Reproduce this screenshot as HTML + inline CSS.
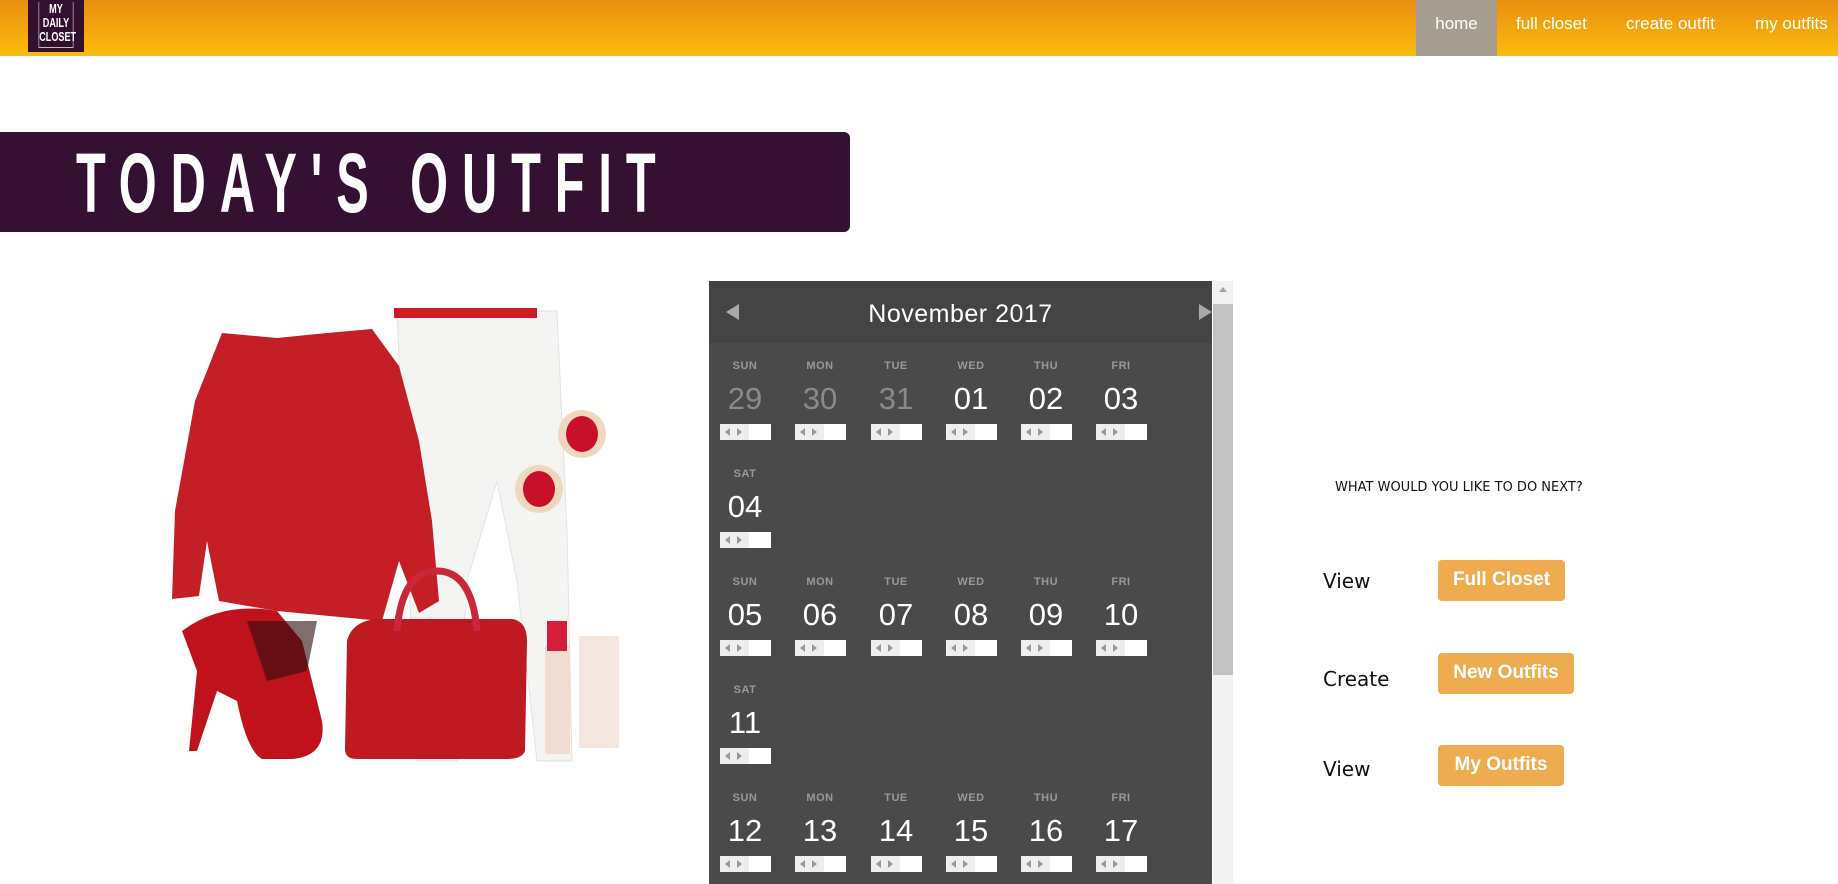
<!DOCTYPE html>
<html><head><meta charset="utf-8"><style>
*{margin:0;padding:0;box-sizing:border-box}
body{width:1838px;height:884px;overflow:hidden;background:#fff;font-family:"Liberation Sans",sans-serif;position:relative}
.nav{position:absolute;left:0;top:0;width:1838px;height:56px;background:linear-gradient(#ea8f10,#f8bd0c)}
.logo{position:absolute;left:28px;top:0;width:56px;height:52px;background:#33102f;color:#fff;font:bold 13px/14px "Liberation Sans",sans-serif;text-align:center;padding-top:2px}
.logo div{border:1px solid #cbb;border-top:none;margin:0 3px;height:46px;transform:scaleX(.7);transform-origin:center}
.nl{position:absolute;top:0;height:56px;line-height:48px;color:#fff;font-size:17px}
.banner{position:absolute;left:0;top:132px;width:850px;height:100px;background:#341032;border-radius:0 6px 6px 0}
.banner span{position:absolute;left:76px;top:9px;color:#fff;font:bold 84px/84px "Liberation Sans",sans-serif;letter-spacing:24px;transform:scaleX(.58);transform-origin:left top;white-space:nowrap}
.cal{position:absolute;left:709px;top:281px;width:503px;height:603px;background:#4a4a4a;overflow:hidden}
.calh{height:62px;background:#444;color:#fff;text-align:center;font-size:25px;line-height:66px;letter-spacing:.5px}
.sb{position:absolute;left:1213px;top:281px;width:20px;height:603px;background:#f1f1f1}
.d{position:absolute;width:60px;text-align:center}
.d b{display:block;font-size:11px;color:#999;letter-spacing:.5px;height:20px}
.d i{display:block;font-style:normal;font-size:31px;color:#fff;height:38px;line-height:38px}
.d i.g{color:#8a8a8a}
.bar{position:absolute;left:5px;width:51px;height:16px;background:#fff}
.bar:before{content:"";position:absolute;left:0;top:0;width:29px;height:16px;background:#eee}
.bar u{position:absolute;top:4px;width:0;height:0;border-top:4px solid transparent;border-bottom:4px solid transparent}
.q{font-family:"DejaVu Sans","Liberation Sans",sans-serif;position:absolute}
.btn{position:absolute;left:1438px;height:41px;background:#eeab4f;border-radius:4px;color:#fff;font:bold 19px/40px "Liberation Sans",sans-serif;text-align:center}
</style></head><body>
<div class="nav">
<div class="logo"><div>MY<br>DAILY<br>CLOSET</div></div>
<div class="nl" style="left:1416px;width:81px;background:#a59e90;text-align:center">home</div>
<div class="nl" style="left:1516px">full closet</div>
<div class="nl" style="left:1626px">create outfit</div>
<div class="nl" style="left:1755px">my outfits</div>
</div>
<div class="banner"><span>TODAY'S OUTFIT</span></div>

<svg style="position:absolute;left:127px;top:281px" width="510" height="505" viewBox="0 0 510 505">
<rect width="510" height="505" fill="#fff"/>
<path d="M270 30 L430 30 L440 250 L445 480 L410 480 L390 300 L370 200 L340 300 L330 480 L290 480 Z" fill="#f4f5f3" stroke="#e2e4e0"/>
<rect x="267" y="27" width="143" height="10" fill="#d01c20"/>
<circle cx="455" cy="153" r="24" fill="#f0d8c0"/><ellipse cx="455" cy="153" rx="16" ry="18" fill="#c8102a"/>
<circle cx="412" cy="208" r="24" fill="#f0d8c0"/><ellipse cx="412" cy="208" rx="16" ry="18" fill="#c8102a"/>
<path d="M95 52 L150 57 L200 52 L245 48 L272 85 L292 160 L305 240 L312 320 L292 332 L272 280 L255 340 L150 330 L92 320 L80 260 L72 315 L45 318 L48 230 L68 120 Z" fill="#c41e26"/>
<path d="M220 360 Q225 340 250 338 L385 338 Q400 340 400 360 L398 470 Q395 478 380 478 L230 478 Q218 478 218 468 Z" fill="#be1a22"/>
<path d="M270 350 Q275 290 310 290 Q345 290 350 350" fill="none" stroke="#c9283a" stroke-width="7"/>
<path d="M55 350 Q95 320 150 330 L175 360 L195 440 Q200 475 165 478 L135 478 Q120 470 110 420 L90 410 L70 470 L62 470 L70 390 Z" fill="#c0121c"/>
<path d="M120 340 L190 340 L180 390 L140 400 Z" fill="#2a0c0e" opacity=".6"/>
<rect x="418" y="365" width="25" height="108" fill="#f2dcd2"/><rect x="420" y="340" width="20" height="30" fill="#d51c3a"/>
<rect x="452" y="355" width="40" height="112" fill="#f6e6e0"/>
</svg>

<div class="cal"><div class="calh">November 2017</div>
<div style="position:absolute;left:17px;top:23px;border-right:13px solid #aaa;border-top:8px solid transparent;border-bottom:8px solid transparent"></div>
<div style="position:absolute;left:490px;top:23px;border-left:13px solid #aaa;border-top:8px solid transparent;border-bottom:8px solid transparent"></div>
</div>
<div class="sb"><div style="position:absolute;left:0;top:23px;width:20px;height:371px;background:#c1c1c1"></div>
<div style="position:absolute;left:6px;top:6px;border-bottom:5px solid #a3a3a3;border-left:4px solid transparent;border-right:4px solid transparent"></div></div>

<div id="days"></div>
<script>
var cols=[745,820,896,971,1046,1121],names=["SUN","MON","TUE","WED","THU","FRI"];
var rows=[[["29","30","31","01","02","03"],[1,1,1,0,0,0]],[["04"],[0],1],[["05","06","07","08","09","10"],[0,0,0,0,0,0]],[["11"],[0],1],[["12","13","14","15","16","17"],[0,0,0,0,0,0]]];
var h="";
rows.forEach(function(r,ri){var top=360+ri*108;r[0].forEach(function(n,ci){
var nm=r[2]?"SAT":names[ci];
h+='<div class="d" style="left:'+(cols[ci]-30)+'px;top:'+top+'px"><b>'+nm+'</b><i class="'+(r[1][ci]?"g":"")+'">'+n+'</i><div class="bar" style="top:64px"><u style="left:5px;border-right:5px solid #999"></u><u style="left:17px;border-left:5px solid #999"></u></div></div>';});});
document.getElementById("days").innerHTML=h;
</script>

<div class="q" style="left:1335px;top:480px;font-size:13px;color:#111">WHAT WOULD YOU LIKE TO DO NEXT?</div>
<div class="q" style="left:1323px;top:569px;font-size:20px;color:#111">View</div>
<div class="btn" style="top:560px;width:127px">Full Closet</div>
<div class="q" style="left:1323px;top:667px;font-size:20px;color:#111">Create</div>
<div class="btn" style="top:653px;width:136px">New Outfits</div>
<div class="q" style="left:1323px;top:757px;font-size:20px;color:#111">View</div>
<div class="btn" style="top:745px;width:126px">My Outfits</div>
</body></html>
